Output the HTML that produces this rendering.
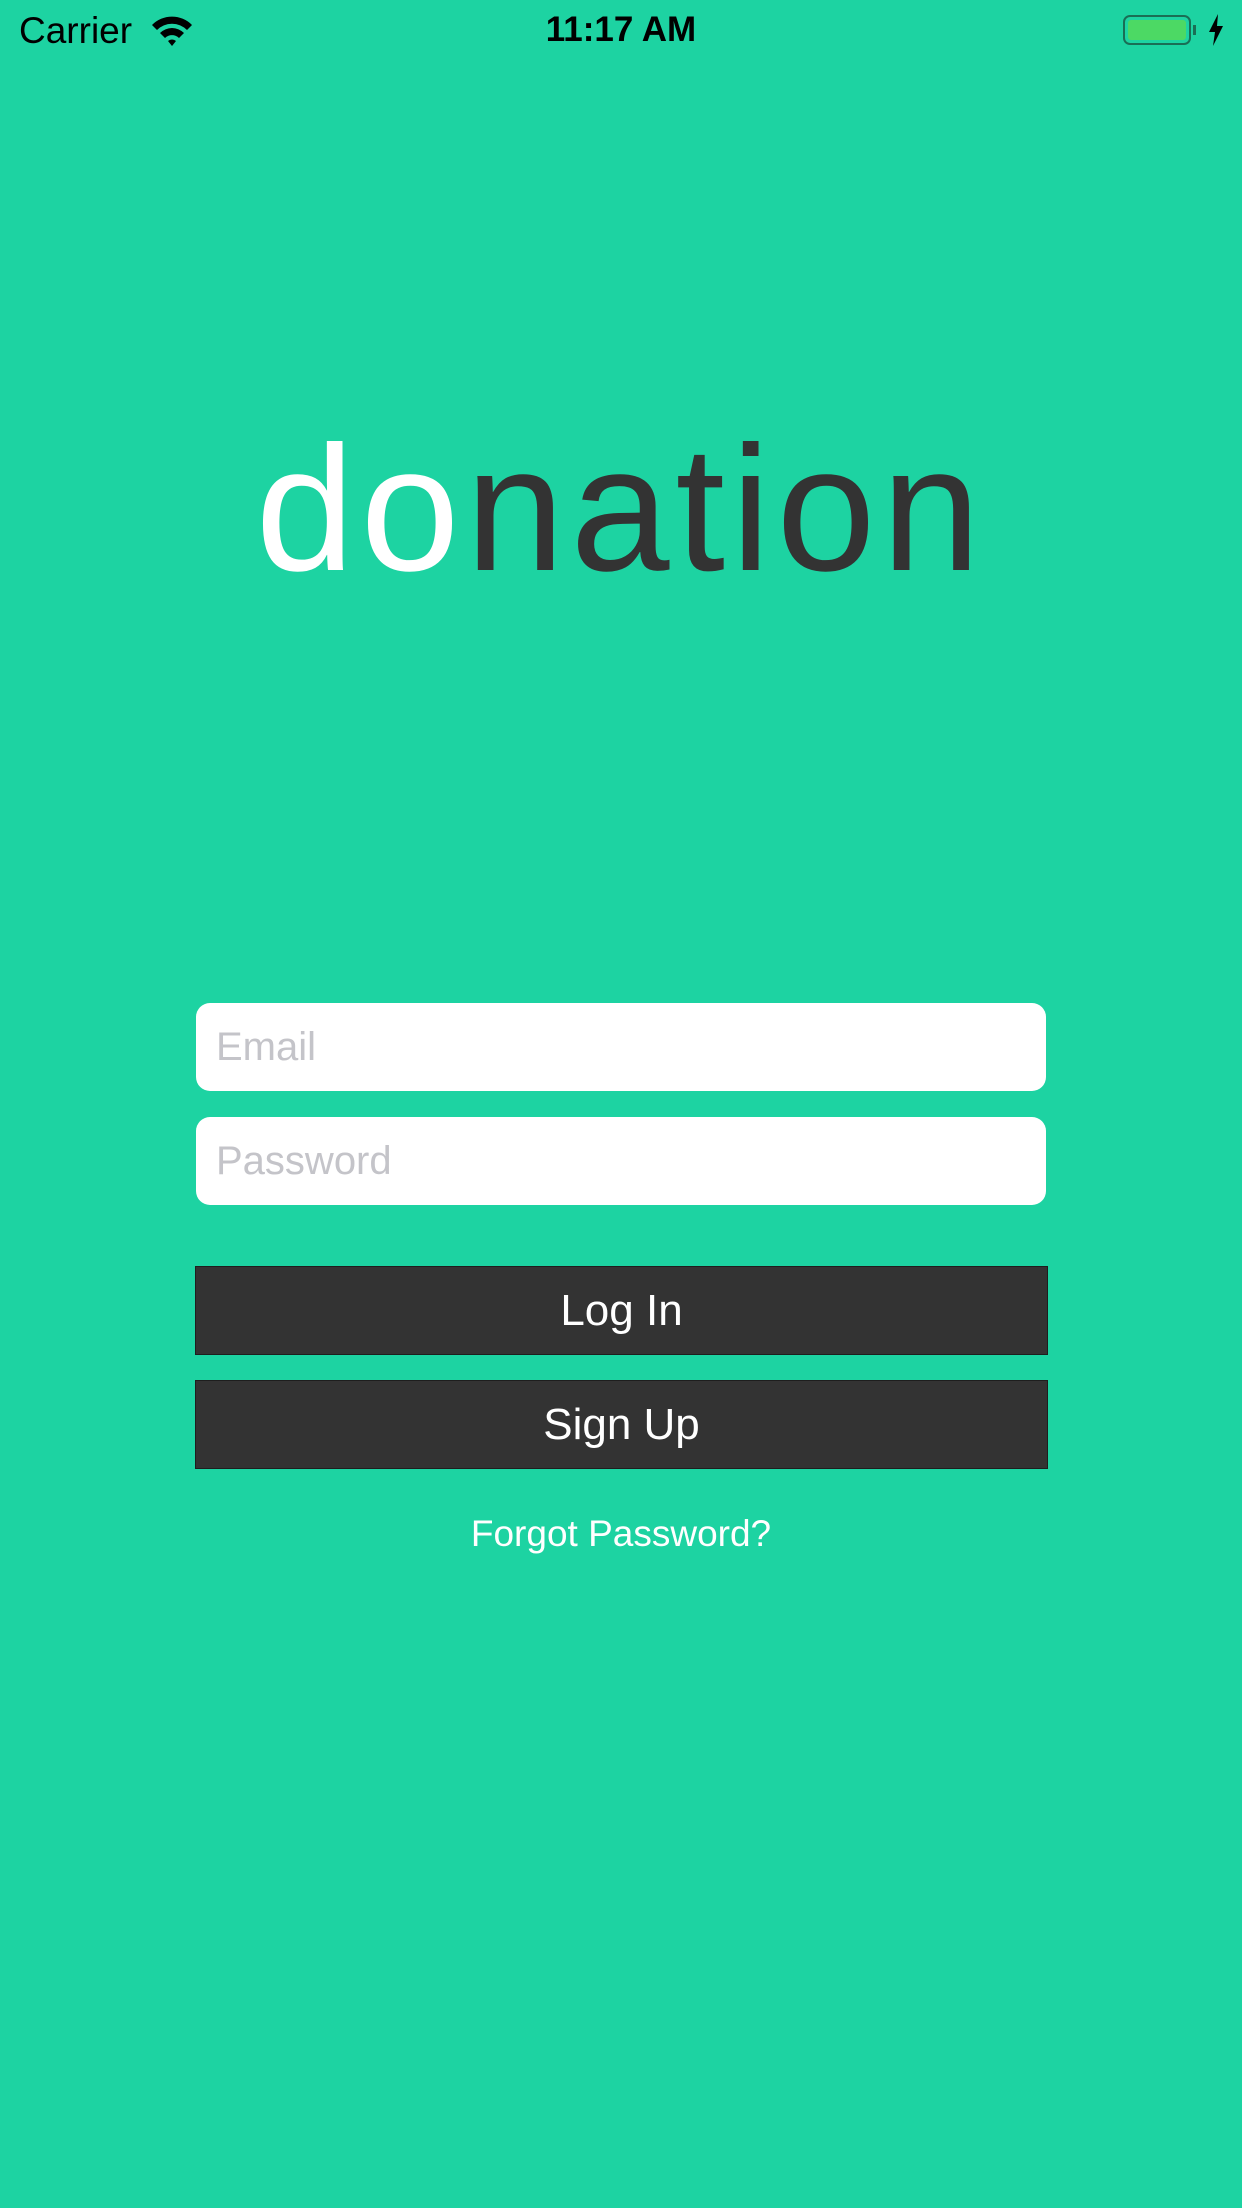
<!DOCTYPE html>
<html><head><meta charset="utf-8"><style>
html,body{margin:0;padding:0}
body{width:1242px;height:2208px;background:#1dd3a2;position:relative;overflow:hidden;font-family:"Liberation Sans",sans-serif}
.a{position:absolute}
.field{position:absolute;left:196px;width:850px;height:88px;background:#fff;border-radius:14px;box-sizing:border-box;padding-left:20px;line-height:88px;font-size:40px;color:#c4c4c9}
.btn{position:absolute;left:195px;width:853px;height:89px;background:#333;border:1px solid #1e1e1e;box-sizing:border-box;text-align:center;line-height:87px;font-size:44px;color:#fff}
</style></head><body>
<div class="a" style="left:19px;top:10px;font-size:37px;color:#000">Carrier</div>
<svg class="a" style="left:150px;top:14px" width="44" height="34" viewBox="0 0 44 34">
<path d="M2 11 A28 28 0 0 1 42 11 L37 16 A21 21 0 0 0 7 16Z" fill="#000"/>
<path d="M10 19 A17 17 0 0 1 34 19 L29 24 A10 10 0 0 0 15 24Z" fill="#000"/>
<path d="M18 27 A6 6 0 0 1 26 27 L22 32Z" fill="#000"/>
</svg>
<div class="a" style="left:0;width:1242px;top:10px;text-align:center;font-size:35px;font-weight:bold;color:#000">11:17 AM</div>
<div class="a" style="left:1123px;top:15px;width:68px;height:30px;border:2px solid #1a6e55;border-radius:7px;box-sizing:border-box;padding:3px"><div style="width:100%;height:100%;background:#4cd964;border-radius:3px"></div></div>
<div class="a" style="left:1193px;top:25px;width:3px;height:10px;background:#1a6e55"></div>
<svg class="a" style="left:1207px;top:14px" width="18" height="32" viewBox="0 0 18 32"><path d="M11 0 L2 18 H8 L6 32 L16 12 H10Z" fill="#000"/></svg>
<div class="a" style="left:0;width:1242px;top:420px;text-align:center;font-size:178px;line-height:178px;letter-spacing:6px;white-space:nowrap"><span style="color:#fff">do</span><span style="color:#333">nation</span></div>
<div class="field" style="top:1003px">Email</div>
<div class="field" style="top:1117px">Password</div>
<div class="btn" style="top:1266px">Log In</div>
<div class="btn" style="top:1380px">Sign Up</div>
<div class="a" style="left:0;width:1242px;top:1513px;text-align:center;font-size:37px;color:#fff">Forgot Password?</div>
</body></html>
